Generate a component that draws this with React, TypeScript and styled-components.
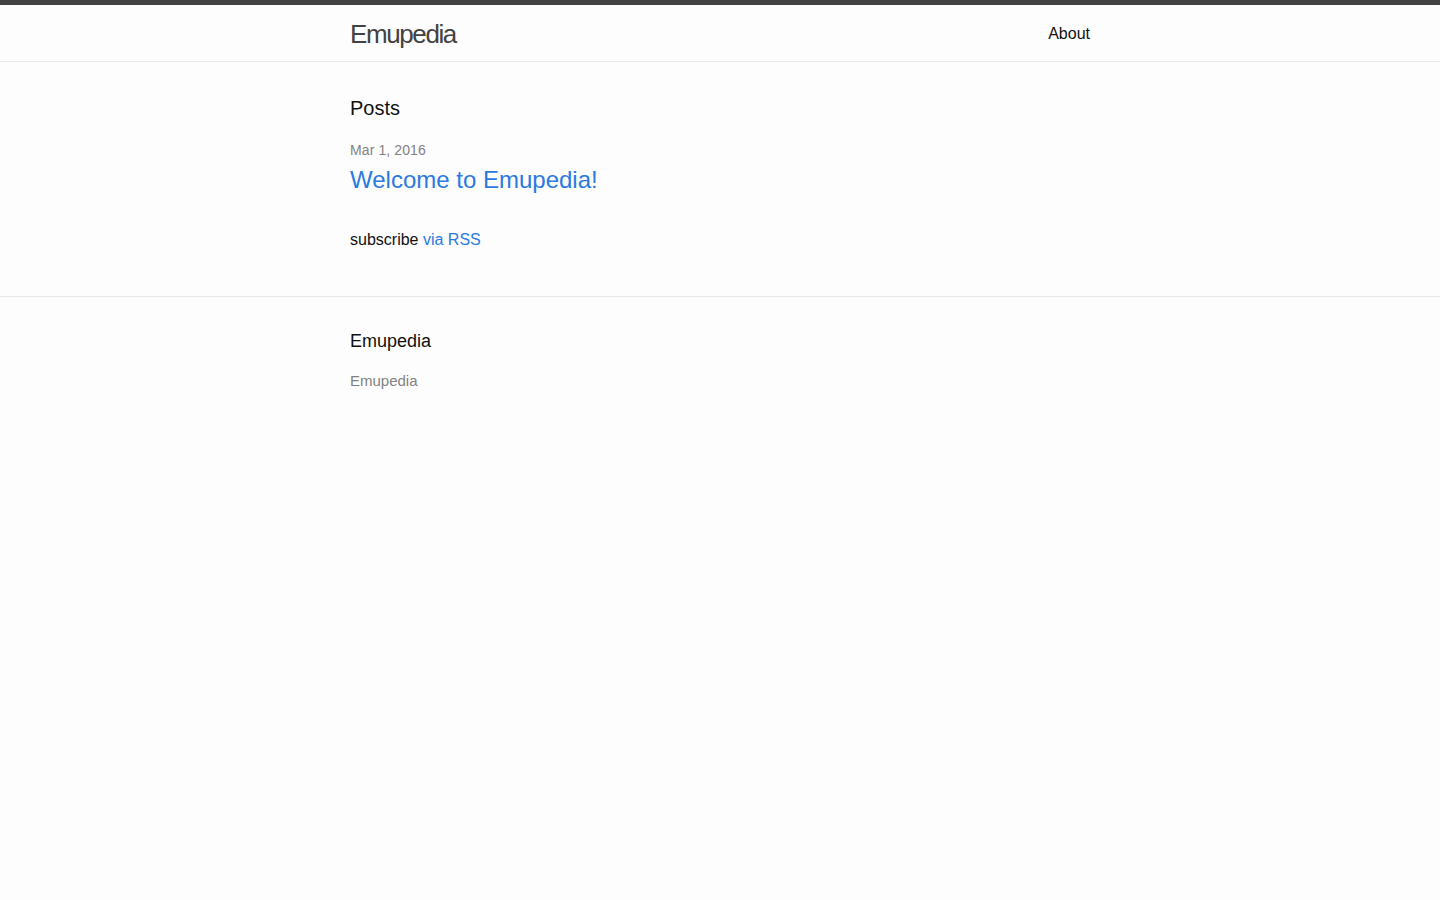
import styled, { createGlobalStyle } from "styled-components";

const GlobalStyle = createGlobalStyle`
  html, body {
    margin: 0;
    padding: 0;
  }
  body {
    background: #fdfdfd;
    color: #111;
    font-family: "Liberation Sans", Arial, sans-serif;
    font-size: 16px;
    line-height: 1.5;
    min-height: 100vh;
  }
  h1, h2, p, ul {
    margin: 0;
    padding: 0;
  }
`;

const Header = styled.header`
  border-top: 5px solid #424242;
  border-bottom: 1px solid #e8e8e8;
  min-height: 56px;
`;

const Wrapper = styled.div`
  max-width: 740px;
  margin: 0 auto;
  padding: 0 30px;
`;

const HeaderRow = styled(Wrapper)`
  display: flex;
  justify-content: space-between;
  align-items: flex-start;
  height: 56px;
`;

const SiteTitle = styled.a`
  font-size: 26px;
  font-weight: 300;
  line-height: 58px;
  height: 56px;
  letter-spacing: -1.4px;
  color: #424242;
  text-decoration: none;
`;

const Nav = styled.nav`
  line-height: 58px;
  height: 56px;
`;

const PageLink = styled.a`
  color: #111;
  line-height: 1.5;
  text-decoration: none;
`;

const Content = styled.main`
  padding: 31px 0 29px;
`;

const PageHeading = styled.h1`
  font-size: 20px;
  font-weight: 400;
  margin-bottom: 15px;
`;

const PostList = styled.ul`
  list-style: none;
  margin-bottom: 30px;
  li {
    margin-bottom: 30px;
  }
`;

const PostMeta = styled.span`
  font-size: 14px;
  color: #828282;
  letter-spacing: 0.1px;
`;

const PostTitle = styled.h2`
  font-size: 24px;
  font-weight: 400;
  margin-bottom: 15px;
  a {
    color: #2a7ae2;
    text-decoration: none;
  }
`;

const Subscribe = styled.p`
  margin-bottom: 15px;
  a {
    color: #2a7ae2;
    text-decoration: none;
  }
`;

const Footer = styled.footer`
  border-top: 1px solid #e8e8e8;
  padding: 31px 0 29px;
`;

const FooterHeading = styled.h2`
  font-size: 18px;
  font-weight: 400;
  margin-bottom: 15px;
`;

const FooterText = styled.ul`
  list-style: none;
  font-size: 15px;
  color: #828282;
`;

const App = (): JSX.Element => {
  return (
    <>
      <GlobalStyle />
      <Header>
        <HeaderRow>
          <SiteTitle href="#">Emupedia</SiteTitle>
          <Nav>
            <PageLink href="#">About</PageLink>
          </Nav>
        </HeaderRow>
      </Header>
      <Content>
        <Wrapper>
          <PageHeading>Posts</PageHeading>
          <PostList>
            <li>
              <PostMeta>Mar 1, 2016</PostMeta>
              <PostTitle>
                <a href="#">Welcome to Emupedia!</a>
              </PostTitle>
            </li>
          </PostList>
          <Subscribe>
            subscribe <a href="#">via RSS</a>
          </Subscribe>
        </Wrapper>
      </Content>
      <Footer>
        <Wrapper>
          <FooterHeading>Emupedia</FooterHeading>
          <FooterText>
            <li>Emupedia</li>
          </FooterText>
        </Wrapper>
      </Footer>
    </>
  );
};

export default App;
